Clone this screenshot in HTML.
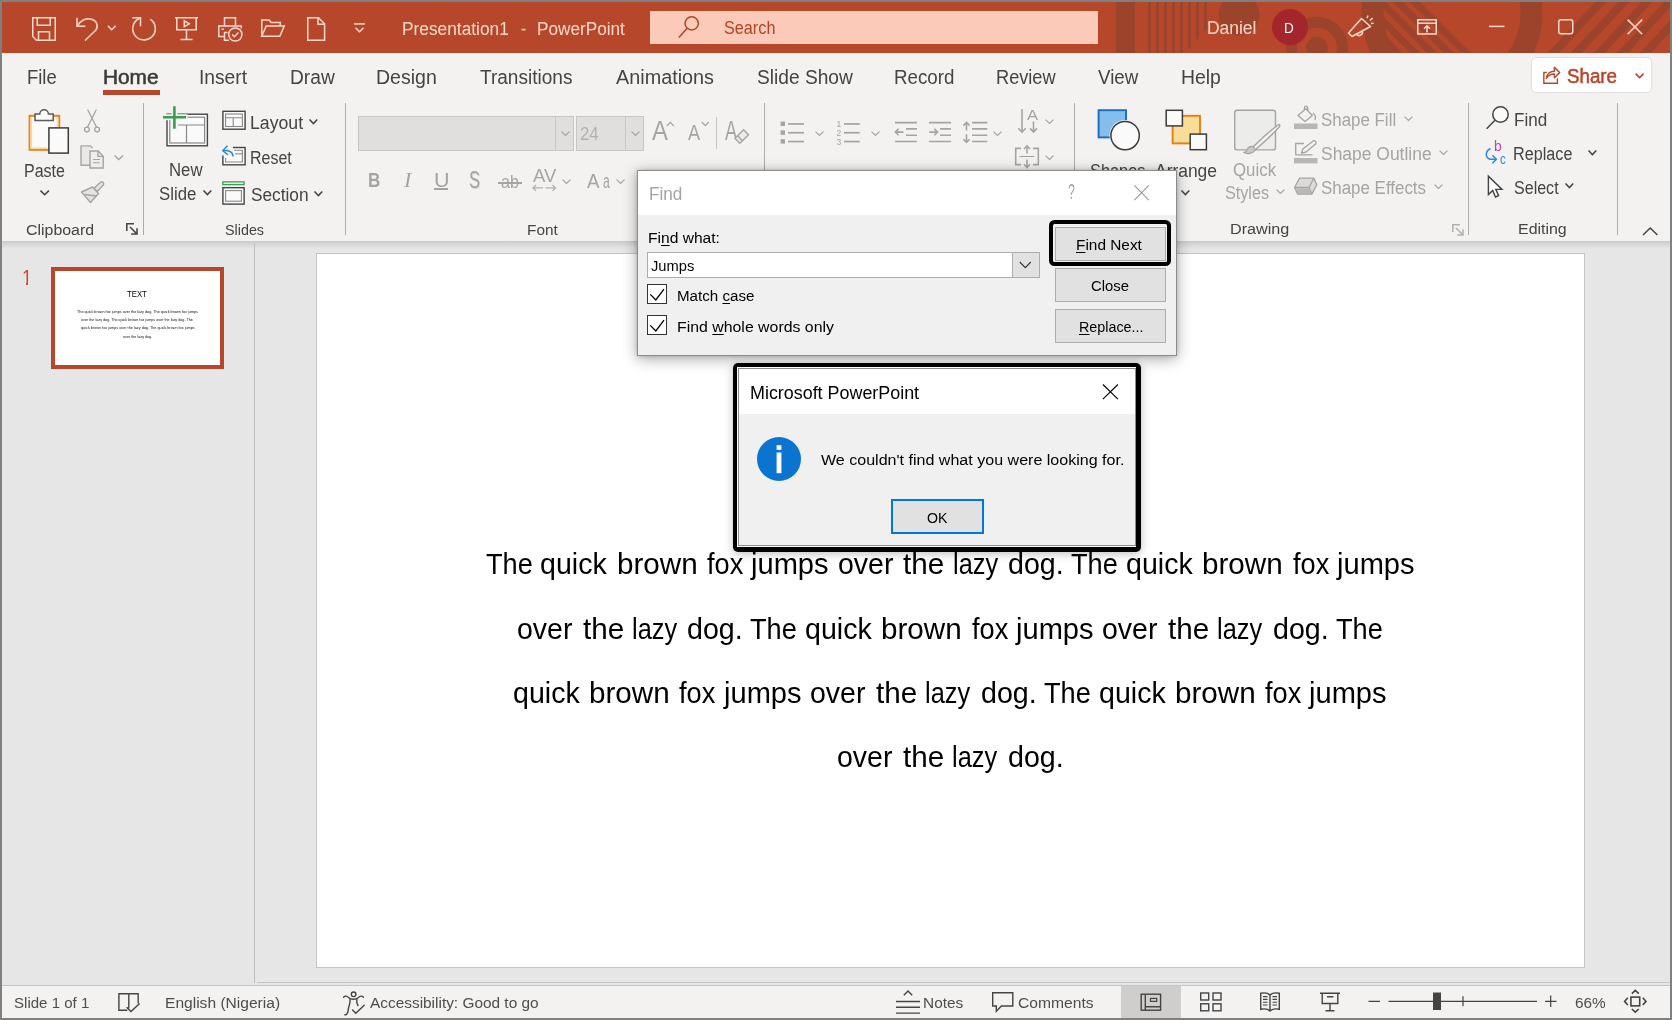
<!DOCTYPE html><html><head><meta charset="utf-8"><title>Presentation1 - PowerPoint</title><style>
*{box-sizing:border-box;margin:0;padding:0}
html,body{width:1672px;height:1020px;overflow:hidden;background:#808080;font-family:"Liberation Sans",sans-serif}
#win{position:absolute;left:2px;top:2px;width:1668px;height:1016px;background:#e6e6e6;overflow:hidden}
#root{position:absolute;left:0;top:0;width:1672px;height:1020px;will-change:transform}
.t{position:absolute;white-space:nowrap;transform-origin:0 50%}
.a{position:absolute}
svg{position:absolute;overflow:visible}
u{text-decoration-thickness:1px;text-underline-offset:2px}
</style></head><body><div id="root">
<div id="win"></div>
<div class="a" style="left:2px;top:2px;width:1668px;height:51px;background:#b7472a"></div>
<svg style="left:1100px;top:2px" width="570" height="51" viewBox="1100 2 570 51"><defs><clipPath id="tb"><rect x="1100" y="2" width="570" height="51"/></clipPath>
<clipPath id="vs"><polygon points="1140,2 1215,2 1215,20 1185,53 1140,53"/></clipPath>
<clipPath id="bigc"><circle cx="1452" cy="13" r="69"/></clipPath>
<clipPath id="rs"><polygon points="1545,53 1590,2 1672,2 1672,53"/></clipPath>
</defs>
<g clip-path="url(#tb)" fill="#9b432b" stroke="none">
<rect x="1116" y="2" width="19" height="51"/>
<g clip-path="url(#vs)">
<rect x="1148" y="2" width="2.8" height="51"/><rect x="1156" y="2" width="2.8" height="51"/><rect x="1164" y="2" width="2.8" height="51"/><rect x="1172" y="2" width="2.8" height="51"/><rect x="1180" y="2" width="2.8" height="51"/><rect x="1188" y="2" width="2.8" height="51"/><rect x="1196" y="2" width="2.8" height="51"/><rect x="1204" y="2" width="2.8" height="51"/>
</g>
<circle cx="1239" cy="15" r="20.5"/>
<circle cx="1317" cy="48" r="11"/>
<circle cx="1317" cy="48" r="25.5" fill="none" stroke="#9b432b" stroke-width="11"/>
<circle cx="1452" cy="13" r="79.5" fill="none" stroke="#9b432b" stroke-width="22"/>
<g clip-path="url(#bigc)" stroke="#9b432b" stroke-width="7" fill="none">
<path d="M1352 -10 L1432 70 M1369 -10 L1449 70 M1386 -10 L1466 70 M1403 -10 L1483 70 M1335 -10 L1415 70 M1318 -10 L1398 70"/>
</g>
<g clip-path="url(#rs)" stroke="#9b432b" stroke-width="8" fill="none">
<path d="M1545 62 L1610 -8 M1568 62 L1633 -8 M1591 62 L1656 -8 M1614 62 L1679 -8 M1637 62 L1702 -8"/>
</g>
</g></svg>
<svg style="left:32px;top:17px" width="24" height="24" viewBox="0 0 24 24" fill="none" stroke="#ffd9cb" stroke-width="1.5"><path d="M.75.75H23.25V23.25H4.5L.75 19.5Z"/><path d="M5.25.75V8.25H18.25V.75"/><path d="M6.5 23.25V14.75H17.5V23.25"/></svg>
<svg style="left:76px;top:17px" width="24" height="24" viewBox="0 0 24 24" fill="none" stroke="#ffd9cb" stroke-width="1.5"><path d="M1 .8V9.2H9.4"/><path d="M1.3 9.2C4 3.5 10 .8 15.5 2.2C21.5 3.8 22.5 10 19.5 13.5L9 23.5"/></svg>
<svg style="left:107px;top:24.5px" width="10" height="6" viewBox="0 0 10 6" fill="none" stroke="#ffd9cb" stroke-width="1.5"><path d="M.8.8L4.7 4.7L8.6.8"/></svg>
<svg style="left:132px;top:17px" width="24" height="24" viewBox="0 0 24 24" fill="none" stroke="#ffd9cb" stroke-width="1.5"><path d="M.2 .75H8.5V9.2"/><path d="M18.4 2.3A11.3 11.3 0 1 1 8.3 1"/></svg>
<svg style="left:175px;top:17px" width="23" height="24" viewBox="0 0 23 24" fill="none" stroke="#ffd9cb" stroke-width="1.5"><path d="M0 .75H23"/><path d="M1.8 .75V12.75H21.2V.75"/><path d="M11.5 12.75V22.5M5.5 22.5H17.5"/><path d="M9.3 3.8L14.3 6.8L9.3 9.8Z"/></svg>
<svg style="left:218px;top:17px" width="25" height="25" viewBox="0 0 25 25" fill="none" stroke="#ffd9cb" stroke-width="1.5"><path d="M6.5 9V.75H17.5V9"/><path d="M6.5 19.5H.75V9H23.25V11.5"/><path d="M9.5 15.5H6.5V23.25H11"/><path d="M3.5 12.2H6"/><circle cx="17.3" cy="17.5" r="6.6"/><path d="M14.2 17.6L16.4 19.8L20.4 15.6"/></svg>
<svg style="left:261px;top:19px" width="24" height="18" viewBox="0 0 24 18" fill="none" stroke="#ffd9cb" stroke-width="1.5"><path d="M.75 17.2V.9H8L10.2 3.5H19.2V7"/><path d="M.75 17.2L5.2 7H23.2L18.8 17.2Z"/></svg>
<svg style="left:307px;top:17px" width="19" height="24" viewBox="0 0 19 24" fill="none" stroke="#ffd9cb" stroke-width="1.5"><path d="M.75.75H11.5L17.6 6.8V23.25H.75Z"/><path d="M11 .75V7.2H17.6"/></svg>
<svg style="left:354px;top:22px" width="12" height="11" viewBox="0 0 12 11" fill="none" stroke="#ffd9cb" stroke-width="1.5"><path d="M0 1.9H11"/><path d="M1.5 5.8L5.5 9.7L9.5 5.8"/></svg>
<div class="a" style="left:650px;top:11px;width:448px;height:33px;background:#fccab9"></div>
<svg style="left:676px;top:14px" width="26" height="26" viewBox="0 0 26 26" fill="none" stroke="#b04528" stroke-width="1.5"><circle cx="15.7" cy="9.4" r="6.6"/><path d="M11.1 14.2L2.9 23.6"/></svg>
<div class="a" style="left:1272px;top:9px;width:36px;height:36px;border-radius:50%;background:#a4262c"></div>
<svg style="left:1347px;top:14px" width="28" height="26" viewBox="0 0 28 26" fill="none" stroke="#ffd9cb" stroke-width="1.5"><path d="M14.5 4.5L23.5 12.5L5 22.5L1.5 19Z" stroke-linejoin="round"/><path d="M9.5 20.2A3.3 3.3 0 0 0 15.2 17"/><path d="M20 4.2L21 1.5M22.8 6.5L25.6 4.2M24 9.6L26.6 9.3"/></svg>
<svg style="left:1417px;top:19px" width="20" height="16" viewBox="0 0 20 16" fill="none" stroke="#ffd9cb" stroke-width="1.5"><rect x=".75" y=".75" width="18.5" height="14.2"/><path d="M.75 4.2H19.25"/><path d="M10 13.5V7M7 9.8L10 6.8L13 9.8"/></svg>
<svg style="left:1489px;top:25px" width="16" height="3" viewBox="0 0 16 3" fill="none" stroke="#ffd9cb" stroke-width="1.5"><path d="M0 1.4H15.5"/></svg>
<svg style="left:1558px;top:19px" width="16" height="16" viewBox="0 0 16 16" fill="none" stroke="#ffd9cb" stroke-width="1.5"><rect x=".75" y=".75" width="14" height="14" rx="2.2"/></svg>
<svg style="left:1627px;top:19px" width="16" height="16" viewBox="0 0 16 16" fill="none" stroke="#ffd9cb" stroke-width="1.5"><path d="M.6.6L15.2 15.2M15.2.6L.6 15.2"/></svg>
<div class="a" style="left:2px;top:53px;width:1668px;height:188px;background:#f3f2f1"></div>
<div class="a" style="left:103px;top:90.2px;width:57px;height:4.4px;background:#b7472a"></div>
<div class="a" style="left:1531px;top:57px;width:121px;height:36px;background:#fff;border:1px solid #e1dfdd;border-radius:5px"></div>
<svg style="left:1543px;top:66px" width="18" height="18" viewBox="0 0 19 18" preserveAspectRatio="none" fill="none" stroke="#b7472a" stroke-width="1.5"><path d="M4 6.5H.9V17.2H15.2V12.5"/><path d="M3.5 12.5C4 8 7.5 5.2 12 5.2V1.2L17.6 6.6L12 11.8V8C8.5 8 5.5 9.5 3.5 12.5Z" stroke-linejoin="round"/></svg>
<svg style="left:1635px;top:72.5px" width="10" height="6" viewBox="0 0 10 6" fill="none" stroke="#b7472a" stroke-width="1.5"><path d="M.6.6L4.6 4.6L8.6.6"/></svg>
<div class="a" style="left:143px;top:103px;width:1px;height:132px;background:#aeacaa"></div>
<div class="a" style="left:345px;top:103px;width:1px;height:132px;background:#aeacaa"></div>
<div class="a" style="left:764px;top:103px;width:1px;height:132px;background:#aeacaa"></div>
<div class="a" style="left:1074px;top:103px;width:1px;height:132px;background:#aeacaa"></div>
<div class="a" style="left:1468px;top:103px;width:1px;height:132px;background:#aeacaa"></div>
<div class="a" style="left:1617px;top:103px;width:1px;height:132px;background:#aeacaa"></div>
<svg style="left:28px;top:109px" width="42" height="46" viewBox="28 109 42 46">
<rect x="29.6" y="115.8" width="29.6" height="34" fill="#fafafa" stroke="#e8821e" stroke-width="2"/>
<path d="M31.2 117.4V148.2H47" fill="none" stroke="#f9dc9a" stroke-width="1.8"/>
<path d="M57.6 117.4V127" fill="none" stroke="#f9dc9a" stroke-width="1.8"/>
<path d="M35 120.4V114H39.8A4.3 4.3 0 0 1 48.4 114H53.2V120.4Z" fill="#fafafa" stroke="#5a5a5a" stroke-width="1.5"/>
<rect x="48.9" y="127.9" width="19.4" height="25.2" fill="#fafafa" stroke="#3b3b3b" stroke-width="1.5"/>
</svg>
<svg style="left:40px;top:190.2px" width="9.4" height="5.8" viewBox="0 0 9.4 5.8" fill="none" stroke="#444" stroke-width="1.5"><path d="M.5 .6L4.70 4.8L8.9 .6"/></svg>
<svg style="left:82px;top:108px" width="20" height="26" viewBox="82 108 20 26" fill="none" stroke="#a6a4a2" stroke-width="1.3">
<path d="M87.6 109.5L96.6 127.2M96.4 109.5L87.4 127.2"/><circle cx="86.9" cy="129.6" r="2.4"/><circle cx="97.1" cy="129.6" r="2.4"/></svg>
<svg style="left:79px;top:144px" width="27" height="26" viewBox="79 144 27 26" fill="#e9e8e7" stroke="#a6a4a2" stroke-width="1.4">
<path d="M90.5 145.9H81V165.2H90"/><path d="M90.5 145.9L92.5 148"/>
<path d="M90 151H98.2L103.2 156.2V168H90Z" fill="#efeeed"/><path d="M98 151V156.4H103.2" fill="none"/>
<path d="M93 159.5H100M93 162.8H100" stroke-width="1.1"/></svg>
<svg style="left:114px;top:155.2px" width="9.6" height="5.6" viewBox="0 0 9.6 5.6" fill="none" stroke="#a6a4a2" stroke-width="1.4"><path d="M.5 .6L4.80 4.6L9.1 .6"/></svg>
<svg style="left:79px;top:180px" width="27" height="25" viewBox="79 180 27 25" fill="#e4e3e2" stroke="#a6a4a2" stroke-width="1.4" stroke-linejoin="round">
<path d="M81.5 192L92.5 187L98.5 193.5L90.5 202.5Z"/><path d="M84.5 194.5L96.2 196"/>
<path d="M94 188.2L100.5 182.2A2 2 0 0 1 103.3 185L97.2 191.6Z"/></svg>
<svg style="left:126px;top:223px" width="12" height="12" viewBox="0 0 12 12" fill="none" stroke="#444" stroke-width="1.55"><path d="M.8 8V.8H8"/><path d="M4 4L11 11M11 5.2V11H5.2"/></svg>
<svg style="left:162px;top:105px" width="48" height="43" viewBox="162 105 48 43">
<rect x="167" y="114.2" width="40.4" height="31.6" fill="#fafafa" stroke="#444" stroke-width="1.4"/>
<rect x="169.8" y="117.2" width="34.8" height="25.8" fill="none" stroke="#8a8886" stroke-width="1.2"/>
<path d="M178 125H204.6M186.5 125V143" fill="none" stroke="#8a8886" stroke-width="1.2"/>
<path d="M161.5 117.2H187.5M174.4 104.5V130.5" stroke="#f3f2f1" stroke-width="6" fill="none"/>
<path d="M163 117.2H186M174.4 106.2V128.8" stroke="#3a9e52" stroke-width="2.6" fill="none"/>
</svg>
<svg style="left:203.3px;top:189.6px" width="8.8" height="5.6" viewBox="0 0 8.8 5.6" fill="none" stroke="#444" stroke-width="1.5"><path d="M.5 .6L4.40 4.6L8.3 .6"/></svg>
<svg style="left:221px;top:109px" width="26" height="22" viewBox="221 109 26 22" fill="none">
<rect x="222.9" y="111.3" width="22.2" height="17.9" fill="#fafafa" stroke="#444" stroke-width="1.4"/>
<rect x="225.6" y="114" width="16.8" height="12.5" stroke="#8a8886" stroke-width="1.1"/>
<path d="M225.6 117.8H242.4M233.2 117.8V126.5" stroke="#8a8886" stroke-width="1.1"/></svg>
<svg style="left:309.2px;top:118.8px" width="8.8" height="5.6" viewBox="0 0 8.8 5.6" fill="none" stroke="#444" stroke-width="1.5"><path d="M.5 .6L4.40 4.6L8.3 .6"/></svg>
<svg style="left:221px;top:144px" width="26" height="23" viewBox="221 144 26 23" fill="none">
<rect x="222.9" y="147.5" width="22.2" height="17.3" fill="#fafafa" stroke="#444" stroke-width="1.4"/>
<path d="M234 150.3H242.4V162H225.6V158" stroke="#8a8886" stroke-width="1.1"/>
<path d="M235 153.8H242.4" stroke="#8a8886" stroke-width="1.1"/>
<rect x="220" y="143" width="13" height="12.5" fill="#f3f2f1" stroke="none"/>
<path d="M223 150.6C229 149.6 233 152.5 233 156.6" stroke="#2b88d8" stroke-width="1.5"/>
<path d="M227.5 145.8L222.8 150.6L227.8 154.8" stroke="#2b88d8" stroke-width="1.5"/></svg>
<svg style="left:221px;top:180px" width="26" height="26" viewBox="221 180 26 26" fill="none">
<rect x="222.8" y="181.9" width="21.3" height="2.7" fill="#fafafa" stroke="#3a9e52" stroke-width="1.3"/>
<rect x="222.9" y="187.7" width="21.2" height="16.4" fill="#fafafa" stroke="#444" stroke-width="1.4"/>
<rect x="225.6" y="190.6" width="15.8" height="10.6" stroke="#8a8886" stroke-width="1.1"/></svg>
<svg style="left:314.2px;top:190.7px" width="8.8" height="5.6" viewBox="0 0 8.8 5.6" fill="none" stroke="#444" stroke-width="1.5"><path d="M.5 .6L4.40 4.6L8.3 .6"/></svg>
<div class="a" style="left:358px;top:116px;width:216px;height:35px;background:#e1dfdd;border:1px solid #c8c6c4"></div>
<div class="a" style="left:555px;top:117px;width:1px;height:33px;background:#c8c6c4"></div>
<svg style="left:561px;top:131.39999999999998px" width="9" height="5.4" viewBox="0 0 9 5.4" fill="none" stroke="#a6a4a2" stroke-width="1.3"><path d="M.5 .6L4.50 4.4L8.5 .6"/></svg>
<div class="a" style="left:576px;top:116px;width:68px;height:35px;background:#e1dfdd;border:1px solid #c8c6c4"></div>
<div class="a" style="left:625px;top:117px;width:1px;height:33px;background:#c8c6c4"></div>
<svg style="left:631px;top:131.39999999999998px" width="9" height="5.4" viewBox="0 0 9 5.4" fill="none" stroke="#a6a4a2" stroke-width="1.3"><path d="M.5 .6L4.50 4.4L8.5 .6"/></svg>
<svg style="left:666px;top:121px" width="9" height="6" viewBox="0 0 9 6" fill="none" stroke="#a6a4a2" stroke-width="1.2"><path d="M.8 5L4.3 1.3L7.8 5"/></svg>
<svg style="left:700.5px;top:121px" width="9" height="6" viewBox="0 0 9 6" fill="none" stroke="#a6a4a2" stroke-width="1.2"><path d="M.8 1L4.3 4.7L7.8 1"/></svg>
<div class="a" style="left:716px;top:117px;width:1px;height:32px;background:#c8c6c4"></div>
<svg style="left:733px;top:128px;z-index:2" width="18" height="17" viewBox="733 128 18 17" fill="#ececeb" stroke="#a6a4a2" stroke-width="1.4" stroke-linejoin="miter"><path d="M743.6 129.8L748.5 134.7L739.9 143.2L735 138.3Z"/><path d="M737.6 135.8L742.5 140.7" fill="none"/></svg>
<div class="a" style="left:434.2px;top:188.2px;width:14px;height:1.5px;background:#a6a4a2"></div>
<div class="a" style="left:498px;top:182.3px;width:23.7px;height:1.3px;background:#a6a4a2"></div>
<svg style="left:532px;top:184px" width="25" height="8" viewBox="532 184 25 8" fill="none" stroke="#b3b1af" stroke-width="1.3"><path d="M533 187.9H543M536 185L533 187.9L536 190.8M545.5 187.9H555.5M552.5 185L555.5 187.9L552.5 190.8"/></svg>
<svg style="left:562px;top:179.39999999999998px" width="9" height="5.4" viewBox="0 0 9 5.4" fill="none" stroke="#a6a4a2" stroke-width="1.3"><path d="M.5 .6L4.50 4.4L8.5 .6"/></svg>
<svg style="left:616px;top:179.39999999999998px" width="9" height="5.4" viewBox="0 0 9 5.4" fill="none" stroke="#a6a4a2" stroke-width="1.3"><path d="M.5 .6L4.50 4.4L8.5 .6"/></svg>
<svg style="left:780px;top:120px" width="25" height="24" viewBox="780 120 25 24" fill="#a6a4a2" stroke="none">
<rect x="780.6" y="121.6" width="4.4" height="4.4"/><rect x="780.6" y="130.4" width="4.4" height="4.4"/><rect x="780.6" y="139.2" width="4.4" height="4.4"/>
<rect x="788" y="123.1" width="16" height="1.7"/><rect x="788" y="131.9" width="16" height="1.7"/><rect x="788" y="140.7" width="16" height="1.7"/></svg>
<svg style="left:815px;top:131.39999999999998px" width="9" height="5.4" viewBox="0 0 9 5.4" fill="none" stroke="#a6a4a2" stroke-width="1.3"><path d="M.5 .6L4.50 4.4L8.5 .6"/></svg>
<svg style="left:836px;top:119px" width="25" height="26" viewBox="836 119 25 26" fill="#a6a4a2" stroke="none">
<rect x="844" y="123.1" width="15.7" height="1.7"/><rect x="844" y="131.9" width="15.7" height="1.7"/><rect x="844" y="140.7" width="15.7" height="1.7"/>
<text x="836.6" y="127.2" font-family="Liberation Sans,sans-serif" font-size="8.5">1</text><text x="836.6" y="136" font-family="Liberation Sans,sans-serif" font-size="8.5">2</text><text x="836.6" y="144.8" font-family="Liberation Sans,sans-serif" font-size="8.5">3</text></svg>
<svg style="left:871px;top:131.39999999999998px" width="9" height="5.4" viewBox="0 0 9 5.4" fill="none" stroke="#a6a4a2" stroke-width="1.3"><path d="M.5 .6L4.50 4.4L8.5 .6"/></svg>
<svg style="left:894px;top:120px" width="24" height="24" viewBox="894 120 24 24" fill="none" stroke="#a6a4a2" stroke-width="1.6">
<path d="M895 122.6H917M906 128.9H917M906 135.2H917M895 141.5H917"/><path d="M895.5 132.1H903.5M898.6 128.9L895.4 132.1L898.6 135.3"/></svg>
<svg style="left:928px;top:120px" width="24" height="24" viewBox="928 120 24 24" fill="none" stroke="#a6a4a2" stroke-width="1.6">
<path d="M929 122.6H951M940 128.9H951M940 135.2H951M929 141.5H951"/><path d="M929.3 132.1H937.5M934.4 128.9L937.6 132.1L934.4 135.3"/></svg>
<svg style="left:962px;top:120px" width="27" height="24" viewBox="962 120 27 24" fill="none" stroke="#a6a4a2" stroke-width="1.6">
<path d="M972 122.6H987.3M972 128.9H987.3M972 135.2H987.3M972 141.5H987.3"/><path d="M966.5 122.4V130.6M966.5 134.2V142.4M963.4 125.6L966.5 122.4L969.6 125.6M963.4 139.2L966.5 142.4L969.6 139.2"/></svg>
<svg style="left:993px;top:131.39999999999998px" width="9" height="5.4" viewBox="0 0 9 5.4" fill="none" stroke="#a6a4a2" stroke-width="1.3"><path d="M.5 .6L4.50 4.4L8.5 .6"/></svg>
<svg style="left:1017px;top:107px" width="24" height="27" viewBox="1017 107 24 27" fill="none" stroke="#a6a4a2" stroke-width="1.6">
<path d="M1022 109V132M1018.3 128.2L1022 132L1025.7 128.2"/><path d="M1033.5 121.5V132M1030 128.4L1033.5 132L1037 128.4"/></svg>
<svg style="left:1045px;top:118.8px" width="9" height="5.4" viewBox="0 0 9 5.4" fill="none" stroke="#a6a4a2" stroke-width="1.3"><path d="M.5 .6L4.50 4.4L8.5 .6"/></svg>
<svg style="left:1014px;top:144px" width="26" height="25" viewBox="1014 144 26 25" fill="none" stroke="#a6a4a2" stroke-width="1.6">
<path d="M1021 148.4H1015.7V164.6H1021M1033 148.4H1038.3V164.6H1033"/><path d="M1019.5 156.5H1034.5" stroke-width="1.1"/>
<path d="M1027 146V153.5M1024 149L1027 145.8L1030 149M1027 159.5V167.3M1024 164.3L1027 167.5L1030 164.3"/></svg>
<svg style="left:1045px;top:154.7px" width="9" height="5.4" viewBox="0 0 9 5.4" fill="none" stroke="#a6a4a2" stroke-width="1.3"><path d="M.5 .6L4.50 4.4L8.5 .6"/></svg>
<svg style="left:1096px;top:108px" width="46" height="44" viewBox="1096 108 46 44">
<rect x="1098.6" y="110.2" width="27.4" height="27.2" fill="#83beec" stroke="#1a6cc0" stroke-width="1.9"/>
<circle cx="1125.1" cy="135.6" r="15.6" fill="#f3f2f1"/>
<circle cx="1125.1" cy="135.6" r="14.2" fill="#fafafa" stroke="#3b3b3b" stroke-width="1.5"/></svg>
<svg style="left:1164px;top:108px" width="45" height="44" viewBox="1164 108 45 44">
<rect x="1172.6" y="115.8" width="27.4" height="27.6" fill="#f9dc95" stroke="#e47f14" stroke-width="1.9"/>
<rect x="1166.2" y="110.3" width="16.2" height="15.6" fill="#fafafa" stroke="#3b3b3b" stroke-width="1.5"/>
<rect x="1190.2" y="134.1" width="16.2" height="15.6" fill="#fafafa" stroke="#3b3b3b" stroke-width="1.5"/></svg>
<svg style="left:1181px;top:189.6px" width="8.8" height="5.6" viewBox="0 0 8.8 5.6" fill="none" stroke="#444" stroke-width="1.5"><path d="M.5 .6L4.40 4.6L8.3 .6"/></svg>
<svg style="left:1233px;top:108px" width="48" height="48" viewBox="1233 108 48 48">
<rect x="1234.7" y="110.3" width="40.8" height="39.6" rx="2.5" fill="#ececeb" stroke="#a6a4a2" stroke-width="1.4"/>
<path d="M1278 125C1270 131 1260 140 1253 147L1255 150C1262 144 1272 135 1279.2 127C1280.5 125 1279.5 124 1278 125Z" fill="#f3f2f1" stroke="#a6a4a2" stroke-width="1.4" stroke-linejoin="round"/>
<path d="M1253.2 146.5C1250 146 1247.5 148 1246.5 150.5C1245.8 152 1244.5 152.5 1243.5 152.3C1247 154.5 1253 154 1255.3 149.8Z" fill="#c8c6c4" stroke="#a6a4a2" stroke-width="1.2" stroke-linejoin="round"/></svg>
<svg style="left:1275.5px;top:189.39999999999998px" width="9" height="5.4" viewBox="0 0 9 5.4" fill="none" stroke="#a6a4a2" stroke-width="1.3"><path d="M.5 .6L4.50 4.4L8.5 .6"/></svg>
<svg style="left:1293px;top:105px" width="26" height="26" viewBox="1293 105 26 26" fill="none" stroke="#a6a4a2" stroke-width="1.3" stroke-linejoin="round">
<rect x="1294" y="123.5" width="23.5" height="5.5" fill="#b9b7b5" stroke="none"/>
<path d="M1298 115.5L1305.8 108.8L1312.4 115.5L1305 121.4Z" fill="#f3f2f1"/><path d="M1304.5 110.2V107.8A1.6 1.6 0 0 1 1307.7 107.8V111"/><path d="M1313 113C1315.5 115 1316 117.5 1315 120" /></svg>
<svg style="left:1403.6px;top:115.8px" width="9" height="5.4" viewBox="0 0 9 5.4" fill="none" stroke="#a6a4a2" stroke-width="1.3"><path d="M.5 .6L4.50 4.4L8.5 .6"/></svg>
<svg style="left:1293px;top:139px" width="26" height="26" viewBox="1293 139 26 26" fill="none" stroke="#a6a4a2" stroke-width="1.3" stroke-linejoin="round">
<rect x="1294" y="158" width="23.5" height="5.4" fill="#b9b7b5" stroke="none"/>
<path d="M1304 143.5H1295.7V154.8H1312.5"/>
<path d="M1301.5 153.2L1302.8 149L1312.6 141.4A1.8 1.8 0 0 1 1315.6 144L1306 152Z" fill="#f3f2f1"/></svg>
<svg style="left:1439.3px;top:149.79999999999998px" width="9" height="5.4" viewBox="0 0 9 5.4" fill="none" stroke="#a6a4a2" stroke-width="1.3"><path d="M.5 .6L4.50 4.4L8.5 .6"/></svg>
<svg style="left:1293px;top:176px" width="26" height="21" viewBox="1293 176 26 21" fill="none" stroke="#a6a4a2" stroke-width="1.3" stroke-linejoin="round">
<path d="M1294.6 187.5L1299.4 178.2H1313.8L1316.8 184.6L1312 194H1297.6Z" fill="#dddbd9"/>
<path d="M1294.6 187.5H1309L1312 194M1309 187.5L1313.8 178.2" /><path d="M1296 188.5H1308.5L1311 193.5H1298Z" fill="#b9b7b5" stroke="none"/></svg>
<svg style="left:1434.3px;top:183.7px" width="9" height="5.4" viewBox="0 0 9 5.4" fill="none" stroke="#a6a4a2" stroke-width="1.3"><path d="M.5 .6L4.50 4.4L8.5 .6"/></svg>
<svg style="left:1451.5px;top:223.5px" width="12" height="12" viewBox="0 0 12 12" fill="none" stroke="#b3b1af" stroke-width="1.55"><path d="M.8 8V.8H8"/><path d="M4 4L11 11M11 5.2V11H5.2"/></svg>
<svg style="left:1485px;top:105px" width="26" height="26" viewBox="1485 105 26 26" fill="none" stroke="#444" stroke-width="1.5">
<circle cx="1500.5" cy="114.5" r="7.7" fill="#fafafa"/><path d="M1495 120.2L1486.6 128.7"/></svg>
<svg style="left:1484px;top:139px" width="25" height="26" viewBox="1484 139 25 26" fill="none" stroke="#2b88d8" stroke-width="1.5">
<path d="M1490.5 148.5C1485.5 151 1484.5 157 1490 159.3H1496"/><path d="M1492.4 155.3L1496.4 159.3L1492.4 163.3"/></svg>
<svg style="left:1588px;top:150.2px" width="8.8" height="5.6" viewBox="0 0 8.8 5.6" fill="none" stroke="#444" stroke-width="1.5"><path d="M.5 .6L4.40 4.6L8.3 .6"/></svg>
<svg style="left:1486px;top:173px" width="19" height="26" viewBox="1486 173 19 26" fill="#fafafa" stroke="#444" stroke-width="1.4" stroke-linejoin="miter">
<path d="M1488.4 176.2V194.6L1492.7 190.5L1495.5 197L1498.6 195.6L1495.8 189.4H1502Z"/></svg>
<svg style="left:1565px;top:183.39999999999998px" width="8.8" height="5.6" viewBox="0 0 8.8 5.6" fill="none" stroke="#444" stroke-width="1.5"><path d="M.5 .6L4.40 4.6L8.3 .6"/></svg>
<svg style="left:1642px;top:227px" width="17" height="9" viewBox="0 0 17 9" fill="none" stroke="#444" stroke-width="1.5"><path d="M1 8L8.2 1L15.4 8"/></svg>
<div class="a" style="left:2px;top:241px;width:1668px;height:8px;background:linear-gradient(#c9c9c9,#d6d6d6 35%,#e6e6e6)"></div>
<div class="a" style="left:254px;top:244px;width:1px;height:739px;background:#bdbdbd"></div>
<div class="a" style="left:257px;top:982px;width:1413px;height:1px;background:#c3c3c3"></div>
<div class="a" style="left:316px;top:253px;width:1269px;height:715px;background:#fff;border:1px solid #c4c4c4"></div>
<div class="a" style="left:19px;top:282.4px;width:6.9px;height:3.4px;background:#e6e6e6;z-index:3"></div><div class="a" style="left:28.3px;top:282.4px;width:5px;height:3.4px;background:#e6e6e6;z-index:3"></div>
<div class="a" style="left:51px;top:267px;width:173px;height:102px;background:#fff;border:4px solid #b7472a"></div>
<div class="a" style="left:2px;top:985px;width:1668px;height:33px;background:#f3f2f1;border-top:1px solid #c6c6c6"></div>
<svg style="left:117px;top:992px" width="24" height="22" viewBox="117 992 24 22" fill="none" stroke="#444" stroke-width="1.4">
<path d="M127.3 1010.2H118.9V993.8H138.2V1003.6M128.8 993.8V1008.6"/>
<path d="M126.6 1007.2L131 1011.5L139.6 1003.6"/></svg>
<svg style="left:341px;top:990px" width="26" height="28" viewBox="341 990 26 28" fill="none" stroke="#444" stroke-width="1.4" stroke-linecap="round">
<circle cx="353.6" cy="994.3" r="2.3"/>
<path d="M343.6 997.2C345 995.5 347 996 348.5 997.5C351 999.8 356 999.8 358.5 997.5C360 996 362 995.5 363.4 997.2"/>
<path d="M350 999.5C350.8 1003.5 348.5 1006 348.3 1009.5C348.2 1012 346.8 1015.5 344.8 1014.8"/>
<path d="M356.8 999.5C356.5 1002 357 1004 358 1005.5"/>
<path d="M352.5 1010L355.8 1013.3L364.2 1005.3"/></svg>
<svg style="left:895px;top:989px" width="27" height="25" viewBox="895 989 27 25" fill="none" stroke="#444" stroke-width="1.4">
<path d="M903.8 995.3L908 991L912.2 995.3"/><path d="M896 1001.5H920M896 1007.3H920M896 1013.1H920"/></svg>
<svg style="left:991px;top:990px" width="24" height="24" viewBox="991 990 24 24" fill="none" stroke="#444" stroke-width="1.4" stroke-linejoin="miter">
<path d="M992.7 992.7H1012.8V1006H1001.5L996.3 1011.2V1006H992.7Z"/></svg>
<div class="a" style="left:1121px;top:986px;width:60px;height:32px;background:#d0cecd"></div>
<svg style="left:1139px;top:991px" width="24" height="22" viewBox="1139 991 24 22" fill="none" stroke="#444" stroke-width="1.4">
<rect x="1141.2" y="994.2" width="19.4" height="16"/><path d="M1145.3 994.2V1010.2M1145.3 1006.7H1160.6"/><rect x="1150.5" y="998.4" width="6.2" height="3" stroke-width="1.2"/></svg>
<svg style="left:1199px;top:991px" width="24" height="22" viewBox="1199 991 24 22" fill="none" stroke="#444" stroke-width="1.4">
<rect x="1200.7" y="993" width="8" height="7"/><rect x="1213" y="993" width="8" height="7"/><rect x="1200.7" y="1003.8" width="8" height="7"/><rect x="1213" y="1003.8" width="8" height="7"/></svg>
<svg style="left:1259px;top:991px" width="23" height="22" viewBox="1259 991 23 22" fill="none" stroke="#444" stroke-width="1.4">
<path d="M1270 995V1011M1270 995C1268 993 1264 992.6 1260.7 993.3V1009.3C1264 1008.6 1268 1009 1270 1011C1272 1009 1276 1008.6 1279.3 1009.3V993.3C1276 992.6 1272 993 1270 995Z"/>
<path d="M1263 996.6H1267.5M1263 999.4H1267.5M1263 1002.2H1267.5M1263 1005H1267.5M1272.5 996.6H1277M1272.5 999.4H1277M1272.5 1002.2H1277M1272.5 1005H1277" stroke-width="1.1"/></svg>
<svg style="left:1319px;top:991px" width="23" height="22" viewBox="1319 991 23 22" fill="none" stroke="#444" stroke-width="1.4">
<path d="M1320 993.2H1340M1322.2 993.2V1003.5H1337.8V993.2M1330 1003.5V1010.5M1325.5 1010.8H1334.5M1327 996.8H1333.4"/></svg>
<svg style="left:1366px;top:990px" width="195" height="24" viewBox="1366 990 195 24" fill="none" stroke="#444" stroke-width="1.2">
<path d="M1368.5 1001.3H1380M1388.5 1001.3H1537M1545 1001.3H1556.5M1550.7 995.5V1007M1463 996.3V1006.3"/>
<rect x="1433" y="992.5" width="8" height="17.5" fill="#444" stroke="none"/></svg>
<svg style="left:1623px;top:989px" width="26" height="25" viewBox="1623 989 26 25" fill="none" stroke="#444" stroke-width="1.6">
<rect x="1630.9" y="997.1" width="8.8" height="8.8"/>
<path d="M1631.8 993.6L1635.3 990.4L1638.8 993.6M1631.8 1009L1635.3 1012.2L1638.8 1009M1627.8 997.8L1624.6 1001.4L1627.8 1005M1642.8 997.8L1646 1001.4L1642.8 1005"/></svg>
<div class="t" style="left:401.74px;top:20.00px;font-size:18px;line-height:18px;color:#ffd9cb;transform:scaleX(0.9612);">Presentation1</div>
<div class="t" style="left:521.00px;top:20.00px;font-size:18px;line-height:18px;color:#ffd9cb;transform:scaleX(0.8667);">-</div>
<div class="t" style="left:537.35px;top:20.00px;font-size:18px;line-height:18px;color:#ffd9cb;transform:scaleX(0.9545);">PowerPoint</div>
<div class="t" style="left:723.80px;top:19.00px;font-size:18px;line-height:18px;color:#b04528;transform:scaleX(0.9014);">Search</div>
<div class="t" style="left:1206.73px;top:19.00px;font-size:18px;line-height:18px;color:#ffd9cb;transform:scaleX(0.9688);">Daniel</div>
<div class="t" style="left:1284.30px;top:20.00px;font-size:15px;line-height:15px;color:#fff;transform:scaleX(0.9000);">D</div>
<div class="t" style="left:27.28px;top:67.00px;font-size:20px;line-height:20px;color:#444;transform:scaleX(0.9195);">File</div>
<div class="t" style="left:199.34px;top:67.00px;font-size:20px;line-height:20px;color:#444;transform:scaleX(0.9603);">Insert</div>
<div class="t" style="left:289.74px;top:67.00px;font-size:20px;line-height:20px;color:#444;transform:scaleX(0.9583);">Draw</div>
<div class="t" style="left:375.72px;top:67.00px;font-size:20px;line-height:20px;color:#444;transform:scaleX(0.9762);">Design</div>
<div class="t" style="left:479.60px;top:67.00px;font-size:20px;line-height:20px;color:#444;transform:scaleX(0.9519);">Transitions</div>
<div class="t" style="left:615.70px;top:67.00px;font-size:20px;line-height:20px;color:#444;transform:scaleX(0.9905);">Animations</div>
<div class="t" style="left:757.20px;top:67.00px;font-size:20px;line-height:20px;color:#444;transform:scaleX(0.9581);">Slide Show</div>
<div class="t" style="left:894.26px;top:67.00px;font-size:20px;line-height:20px;color:#444;transform:scaleX(0.9367);">Record</div>
<div class="t" style="left:996.29px;top:67.00px;font-size:20px;line-height:20px;color:#444;transform:scaleX(0.9089);">Review</div>
<div class="t" style="left:1098.00px;top:67.00px;font-size:20px;line-height:20px;color:#444;transform:scaleX(0.9347);">View</div>
<div class="t" style="left:1181.23px;top:67.00px;font-size:20px;line-height:20px;color:#444;transform:scaleX(0.9698);">Help</div>
<div class="t" style="left:102.86px;top:67.00px;font-size:20px;line-height:20px;color:#3b3a39;transform:scaleX(1.0397);-webkit-text-stroke:0.55px #3b3a39;">Home</div>
<div class="t" style="left:1567.40px;top:66.00px;font-size:20px;line-height:20px;color:#b7472a;transform:scaleX(0.9372);-webkit-text-stroke:0.55px #b7472a;">Share</div>
<div class="t" style="left:24.21px;top:162.00px;font-size:18px;line-height:18px;color:#444;transform:scaleX(0.8885);">Paste</div>
<div class="t" style="left:26.20px;top:222.00px;font-size:15.2px;line-height:15.2px;color:#444;transform:scaleX(1.0471);">Clipboard</div>
<div class="t" style="left:169.37px;top:161.00px;font-size:18px;line-height:18px;color:#444;transform:scaleX(0.9303);">New</div>
<div class="t" style="left:159.00px;top:185.00px;font-size:18px;line-height:18px;color:#444;transform:scaleX(0.9322);">Slide</div>
<div class="t" style="left:249.92px;top:114.00px;font-size:18px;line-height:18px;color:#444;transform:scaleX(0.9822);">Layout</div>
<div class="t" style="left:250.31px;top:149.00px;font-size:18px;line-height:18px;color:#444;transform:scaleX(0.8866);">Reset</div>
<div class="t" style="left:250.90px;top:186.00px;font-size:18px;line-height:18px;color:#444;transform:scaleX(0.9589);">Section</div>
<div class="t" style="left:224.70px;top:222.00px;font-size:15.2px;line-height:15.2px;color:#444;transform:scaleX(0.9432);">Slides</div>
<div class="t" style="left:579.70px;top:125.00px;font-size:18px;line-height:18px;color:#b3b1af;transform:scaleX(0.9345);">24</div>
<div class="t" style="left:651.60px;top:117.00px;font-size:28px;line-height:28px;color:#a6a4a2;transform:scaleX(0.8526);">A</div>
<div class="t" style="left:688.40px;top:122.00px;font-size:21.6px;line-height:21.6px;color:#a6a4a2;transform:scaleX(0.8400);">A</div>
<div class="t" style="left:725.40px;top:117.00px;font-size:28px;line-height:28px;color:#a6a4a2;transform:scaleX(0.6526);">A</div>
<div class="t" style="left:368.05px;top:170.00px;font-size:20px;line-height:20px;color:#a6a4a2;transform:scaleX(0.8538);font-weight:700;">B</div>
<div class="t" style="left:404.36px;top:170.00px;font-size:21px;line-height:21px;color:#a6a4a2;transform:scaleX(1.0556);font-style:italic;font-family:'Liberation Serif', serif;">I</div>
<div class="t" style="left:433.62px;top:170.00px;font-size:20px;line-height:20px;color:#a6a4a2;transform:scaleX(1.0750);">U</div>
<div class="t" style="left:469.99px;top:170.00px;font-size:23px;line-height:23px;color:#d3d1cf;transform:scaleX(0.7143);">S</div>
<div class="t" style="left:468.79px;top:169.00px;font-size:23px;line-height:23px;color:#a6a4a2;transform:scaleX(0.7143);">S</div>
<div class="t" style="left:501.10px;top:173.00px;font-size:18px;line-height:18px;color:#a6a4a2;transform:scaleX(0.8945);">ab</div>
<div class="t" style="left:532.50px;top:167.00px;font-size:18px;line-height:18px;color:#a6a4a2;transform:scaleX(1.0278);">AV</div>
<div class="t" style="left:587.30px;top:171.00px;font-size:20px;line-height:20px;color:#a6a4a2;transform:scaleX(0.9357);">A</div>
<div class="t" style="left:602.80px;top:171.00px;font-size:20px;line-height:20px;color:#a6a4a2;transform:scaleX(0.6083);">a</div>
<div class="t" style="left:526.69px;top:222.00px;font-size:15.2px;line-height:15.2px;color:#444;transform:scaleX(1.0109);">Font</div>
<div class="t" style="left:1027.30px;top:107.00px;font-size:15px;line-height:15px;color:#a6a4a2;transform:scaleX(1.1000);">A</div>
<div class="t" style="left:1090.00px;top:162.00px;font-size:18px;line-height:18px;color:#444;transform:scaleX(0.9075);">Shapes</div>
<div class="t" style="left:1155.00px;top:162.00px;font-size:18px;line-height:18px;color:#444;transform:scaleX(0.9684);">Arrange</div>
<div class="t" style="left:1233.30px;top:161.00px;font-size:18px;line-height:18px;color:#a6a4a2;transform:scaleX(0.9360);">Quick</div>
<div class="t" style="left:1224.50px;top:184.00px;font-size:18px;line-height:18px;color:#a6a4a2;transform:scaleX(0.8977);">Styles</div>
<div class="t" style="left:1321.40px;top:111.00px;font-size:18px;line-height:18px;color:#a6a4a2;transform:scaleX(0.9387);">Shape Fill</div>
<div class="t" style="left:1321.40px;top:145.00px;font-size:18px;line-height:18px;color:#a6a4a2;transform:scaleX(0.9696);">Shape Outline</div>
<div class="t" style="left:1321.40px;top:179.00px;font-size:18px;line-height:18px;color:#a6a4a2;transform:scaleX(0.9396);">Shape Effects</div>
<div class="t" style="left:1229.73px;top:221.00px;font-size:15.2px;line-height:15.2px;color:#444;transform:scaleX(1.0652);">Drawing</div>
<div class="t" style="left:1513.55px;top:111.00px;font-size:18px;line-height:18px;color:#444;transform:scaleX(0.9483);">Find</div>
<div class="t" style="left:1494.20px;top:138.00px;font-size:15px;line-height:15px;color:#b146c2;transform:scaleX(0.9250);">b</div>
<div class="t" style="left:1500.00px;top:151.00px;font-size:15px;line-height:15px;color:#2b88d8;transform:scaleX(0.7750);">c</div>
<div class="t" style="left:1513.30px;top:145.00px;font-size:18px;line-height:18px;color:#444;transform:scaleX(0.8996);">Replace</div>
<div class="t" style="left:1514.00px;top:179.00px;font-size:18px;line-height:18px;color:#444;transform:scaleX(0.8915);">Select</div>
<div class="t" style="left:1518.45px;top:221.00px;font-size:15.2px;line-height:15.2px;color:#444;transform:scaleX(1.0491);">Editing</div>
<div class="t" style="left:21.71px;top:267.00px;font-size:22.6px;line-height:22.6px;color:#d24726;transform:scaleX(0.7909);">1</div>
<div class="t" style="left:485.50px;top:550.00px;font-size:28.8px;line-height:28.8px;color:#000;transform:scaleX(0.9443);">The</div>
<div class="t" style="left:540.41px;top:550.00px;font-size:28.8px;line-height:28.8px;color:#000;transform:scaleX(0.9921);">quick</div>
<div class="t" style="left:616.77px;top:550.00px;font-size:28.8px;line-height:28.8px;color:#000;transform:scaleX(1.0299);">brown</div>
<div class="t" style="left:706.90px;top:550.00px;font-size:28.8px;line-height:28.8px;color:#000;transform:scaleX(0.9432);">fox</div>
<div class="t" style="left:751.31px;top:550.00px;font-size:28.8px;line-height:28.8px;color:#000;transform:scaleX(1.0101);">jumps</div>
<div class="t" style="left:837.61px;top:550.00px;font-size:28.8px;line-height:28.8px;color:#000;transform:scaleX(0.9904);">over</div>
<div class="t" style="left:903.40px;top:550.00px;font-size:28.8px;line-height:28.8px;color:#000;transform:scaleX(1.0303);">the</div>
<div class="t" style="left:952.72px;top:550.00px;font-size:28.8px;line-height:28.8px;color:#000;transform:scaleX(0.8797);">lazy</div>
<div class="t" style="left:1008.11px;top:550.00px;font-size:28.8px;line-height:28.8px;color:#000;transform:scaleX(0.9935);">dog.</div>
<div class="t" style="left:1071.10px;top:550.00px;font-size:28.8px;line-height:28.8px;color:#000;transform:scaleX(0.9443);">The</div>
<div class="t" style="left:1126.01px;top:550.00px;font-size:28.8px;line-height:28.8px;color:#000;transform:scaleX(0.9921);">quick</div>
<div class="t" style="left:1202.37px;top:550.00px;font-size:28.8px;line-height:28.8px;color:#000;transform:scaleX(1.0299);">brown</div>
<div class="t" style="left:1292.50px;top:550.00px;font-size:28.8px;line-height:28.8px;color:#000;transform:scaleX(0.9432);">fox</div>
<div class="t" style="left:1336.91px;top:550.00px;font-size:28.8px;line-height:28.8px;color:#000;transform:scaleX(1.0101);">jumps</div>
<div class="t" style="left:516.71px;top:615.00px;font-size:28.8px;line-height:28.8px;color:#000;transform:scaleX(0.9904);">over</div>
<div class="t" style="left:582.50px;top:615.00px;font-size:28.8px;line-height:28.8px;color:#000;transform:scaleX(1.0303);">the</div>
<div class="t" style="left:631.82px;top:615.00px;font-size:28.8px;line-height:28.8px;color:#000;transform:scaleX(0.8797);">lazy</div>
<div class="t" style="left:687.21px;top:615.00px;font-size:28.8px;line-height:28.8px;color:#000;transform:scaleX(0.9935);">dog.</div>
<div class="t" style="left:750.20px;top:615.00px;font-size:28.8px;line-height:28.8px;color:#000;transform:scaleX(0.9443);">The</div>
<div class="t" style="left:805.11px;top:615.00px;font-size:28.8px;line-height:28.8px;color:#000;transform:scaleX(0.9921);">quick</div>
<div class="t" style="left:881.47px;top:615.00px;font-size:28.8px;line-height:28.8px;color:#000;transform:scaleX(1.0299);">brown</div>
<div class="t" style="left:971.60px;top:615.00px;font-size:28.8px;line-height:28.8px;color:#000;transform:scaleX(0.9432);">fox</div>
<div class="t" style="left:1016.01px;top:615.00px;font-size:28.8px;line-height:28.8px;color:#000;transform:scaleX(1.0101);">jumps</div>
<div class="t" style="left:1102.31px;top:615.00px;font-size:28.8px;line-height:28.8px;color:#000;transform:scaleX(0.9904);">over</div>
<div class="t" style="left:1168.10px;top:615.00px;font-size:28.8px;line-height:28.8px;color:#000;transform:scaleX(1.0303);">the</div>
<div class="t" style="left:1217.42px;top:615.00px;font-size:28.8px;line-height:28.8px;color:#000;transform:scaleX(0.8797);">lazy</div>
<div class="t" style="left:1272.81px;top:615.00px;font-size:28.8px;line-height:28.8px;color:#000;transform:scaleX(0.9935);">dog.</div>
<div class="t" style="left:1335.80px;top:615.00px;font-size:28.8px;line-height:28.8px;color:#000;transform:scaleX(0.9443);">The</div>
<div class="t" style="left:512.91px;top:679.00px;font-size:28.8px;line-height:28.8px;color:#000;transform:scaleX(0.9921);">quick</div>
<div class="t" style="left:589.27px;top:679.00px;font-size:28.8px;line-height:28.8px;color:#000;transform:scaleX(1.0299);">brown</div>
<div class="t" style="left:679.40px;top:679.00px;font-size:28.8px;line-height:28.8px;color:#000;transform:scaleX(0.9432);">fox</div>
<div class="t" style="left:723.81px;top:679.00px;font-size:28.8px;line-height:28.8px;color:#000;transform:scaleX(1.0101);">jumps</div>
<div class="t" style="left:810.11px;top:679.00px;font-size:28.8px;line-height:28.8px;color:#000;transform:scaleX(0.9904);">over</div>
<div class="t" style="left:875.90px;top:679.00px;font-size:28.8px;line-height:28.8px;color:#000;transform:scaleX(1.0303);">the</div>
<div class="t" style="left:925.22px;top:679.00px;font-size:28.8px;line-height:28.8px;color:#000;transform:scaleX(0.8797);">lazy</div>
<div class="t" style="left:980.61px;top:679.00px;font-size:28.8px;line-height:28.8px;color:#000;transform:scaleX(0.9935);">dog.</div>
<div class="t" style="left:1043.60px;top:679.00px;font-size:28.8px;line-height:28.8px;color:#000;transform:scaleX(0.9443);">The</div>
<div class="t" style="left:1098.51px;top:679.00px;font-size:28.8px;line-height:28.8px;color:#000;transform:scaleX(0.9921);">quick</div>
<div class="t" style="left:1174.87px;top:679.00px;font-size:28.8px;line-height:28.8px;color:#000;transform:scaleX(1.0299);">brown</div>
<div class="t" style="left:1265.00px;top:679.00px;font-size:28.8px;line-height:28.8px;color:#000;transform:scaleX(0.9432);">fox</div>
<div class="t" style="left:1309.41px;top:679.00px;font-size:28.8px;line-height:28.8px;color:#000;transform:scaleX(1.0101);">jumps</div>
<div class="t" style="left:837.31px;top:743.00px;font-size:28.8px;line-height:28.8px;color:#000;transform:scaleX(0.9904);">over</div>
<div class="t" style="left:903.10px;top:743.00px;font-size:28.8px;line-height:28.8px;color:#000;transform:scaleX(1.0303);">the</div>
<div class="t" style="left:952.42px;top:743.00px;font-size:28.8px;line-height:28.8px;color:#000;transform:scaleX(0.8797);">lazy</div>
<div class="t" style="left:1007.81px;top:743.00px;font-size:28.8px;line-height:28.8px;color:#000;transform:scaleX(0.9935);">dog.</div>
<div class="t" style="left:870.96px;top:396.00px;font-size:60px;line-height:60px;color:#000;transform:scaleX(1.0350);">TEXT</div>
<div class="t" style="left:76.94px;top:310.00px;font-size:4.2px;line-height:4.2px;color:#111;transform:scaleX(0.8964);">The quick brown fox jumps over the lazy dog. The quick brown fox jumps</div>
<div class="t" style="left:81.14px;top:318.00px;font-size:4.2px;line-height:4.2px;color:#111;transform:scaleX(0.8839);">over the lazy dog. The quick brown fox jumps over the lazy dog. The</div>
<div class="t" style="left:80.64px;top:326.00px;font-size:4.2px;line-height:4.2px;color:#111;transform:scaleX(0.8983);">quick brown fox jumps over the lazy dog. The quick brown fox jumps</div>
<div class="t" style="left:122.89px;top:335.00px;font-size:4.2px;line-height:4.2px;color:#111;transform:scaleX(0.8837);">over the lazy dog.</div>
<div class="t" style="left:127.30px;top:290.00px;font-size:8.7px;line-height:8.7px;color:#000;transform:scaleX(0.8910);">TEXT</div>
<div class="t" style="left:13.70px;top:995.00px;font-size:15.5px;line-height:15.5px;color:#4d4d4d;transform:scaleX(0.9710);">Slide 1 of 1</div>
<div class="t" style="left:164.70px;top:995.00px;font-size:15.5px;line-height:15.5px;color:#4d4d4d;transform:scaleX(1.0043);">English (Nigeria)</div>
<div class="t" style="left:369.50px;top:995.00px;font-size:15.5px;line-height:15.5px;color:#4d4d4d;transform:scaleX(0.9935);">Accessibility: Good to go</div>
<div class="t" style="left:922.51px;top:995.00px;font-size:15.5px;line-height:15.5px;color:#4d4d4d;transform:scaleX(0.9939);">Notes</div>
<div class="t" style="left:1017.60px;top:995.00px;font-size:15.5px;line-height:15.5px;color:#4d4d4d;transform:scaleX(1.0095);">Comments</div>
<div class="t" style="left:1575.00px;top:995.00px;font-size:15.5px;line-height:15.5px;color:#4d4d4d;transform:scaleX(0.9923);">66%</div>
<div class="a" style="left:637px;top:170px;width:540px;height:186px;background:#f0f0f0;border:1px solid #8c8c8c;box-shadow:0 3px 14px rgba(0,0,0,.33),0 0 4px rgba(0,0,0,.18)"><div style="position:absolute;left:0;top:0;width:538px;height:44px;background:#fff"></div></div>
<svg style="left:1134px;top:185px" width="16" height="16" viewBox="0 0 16 16" fill="none" stroke="#9a9a9a" stroke-width="1.1"><path d="M.4.4L14.8 15.2M14.8.4L.4 15.2"/></svg>
<div class="a" style="left:647px;top:252px;width:393px;height:26px;background:#fff;border:1px solid #adadad"></div>
<div class="a" style="left:1012px;top:252px;width:28px;height:26px;background:#e1e1e1;border:1px solid #adadad"></div>
<svg style="left:1019px;top:261px" width="13" height="8" viewBox="0 0 13 8" fill="none" stroke="#333" stroke-width="1.1"><path d="M.8 1L6.3 6.6L11.8 1"/></svg>
<div class="a" style="left:647px;top:284px;width:20px;height:20px;background:#fff;border:1px solid #333"></div>
<svg style="left:647px;top:284px" width="20" height="20" viewBox="0 0 20 20" fill="none" stroke="#000" stroke-width="1.3"><path d="M3.3 10.4L8.8 15.9L17 5.2"/></svg>
<div class="a" style="left:647px;top:315.3px;width:20px;height:20px;background:#fff;border:1px solid #333"></div>
<svg style="left:647px;top:315.3px" width="20" height="20" viewBox="0 0 20 20" fill="none" stroke="#000" stroke-width="1.3"><path d="M3.3 10.4L8.8 15.9L17 5.2"/></svg>
<div class="a" style="left:1048.8px;top:220.3px;width:122.2px;height:45.8px;border:4px solid #000;border-radius:5.5px"></div>
<div class="a" style="left:1055px;top:227.3px;width:111px;height:33.8px;background:#e1e1e1;border:1px solid #adadad"></div>
<div class="a" style="left:1055px;top:268.3px;width:111px;height:33.8px;background:#e1e1e1;border:1px solid #adadad"></div>
<div class="a" style="left:1055px;top:309.4px;width:111px;height:33.8px;background:#e1e1e1;border:1px solid #adadad"></div>
<div class="a" style="left:733.2px;top:363.2px;width:407.8px;height:188.4px;background:#000;border-radius:5px;box-shadow:0 2px 10px rgba(0,0,0,.25)"></div>
<div class="a" style="left:736.7px;top:366.7px;width:399.8px;height:180.4px;background:#fff"></div>
<div class="a" style="left:737.5px;top:367.5px;width:398px;height:178px;background:#f0f0f0;border:1px solid #8c8c8c"><div style="position:absolute;left:0;top:0;width:396px;height:45.6px;background:#fff"></div></div>
<svg style="left:1102px;top:384px" width="17" height="16" viewBox="0 0 17 16" fill="none" stroke="#000" stroke-width="1.1"><path d="M.9.5L15.9 15.2M15.9.5L.9 15.2"/></svg>
<svg style="left:757px;top:437px" width="44" height="44" viewBox="0 0 44 44"><circle cx="22" cy="22" r="22" fill="#0a74d0"/><rect x="19.6" y="8.2" width="4.8" height="4.6" fill="#fff"/><rect x="19.6" y="15.5" width="4.8" height="20.7" fill="#fff"/></svg>
<div class="a" style="left:891px;top:499px;width:93px;height:35px;background:#e1e1e1;border:2px solid #0078d7"></div>
<div class="t" style="left:648.87px;top:185.00px;font-size:18.5px;line-height:18.5px;color:#a5a3a1;transform:scaleX(0.9280);">Find</div>
<div class="t" style="left:1068.40px;top:182.00px;font-size:21.5px;line-height:21.5px;color:#a5a3a1;transform:scaleX(0.5750);">?</div>
<div class="t" style="left:648.48px;top:230.00px;font-size:15.3px;line-height:15.3px;color:#000;transform:scaleX(1.0188);">Fi<u>n</u>d what:</div>
<div class="t" style="left:650.80px;top:258.00px;font-size:15.3px;line-height:15.3px;color:#000;transform:scaleX(0.9602);">Jumps</div>
<div class="t" style="left:676.61px;top:288.00px;font-size:15.3px;line-height:15.3px;color:#000;transform:scaleX(0.9894);">Match <u>c</u>ase</div>
<div class="t" style="left:676.56px;top:319.00px;font-size:15.3px;line-height:15.3px;color:#000;transform:scaleX(1.0366);">Find <u>w</u>hole words only</div>
<div class="t" style="left:1076.29px;top:237.00px;font-size:15.3px;line-height:15.3px;color:#000;transform:scaleX(1.0060);"><u>F</u>ind Next</div>
<div class="t" style="left:1091.40px;top:278.00px;font-size:15.3px;line-height:15.3px;color:#000;transform:scaleX(0.9689);">Close</div>
<div class="t" style="left:1078.66px;top:319.00px;font-size:15.3px;line-height:15.3px;color:#000;transform:scaleX(0.9366);"><u>R</u>eplace...</div>
<div class="t" style="left:749.88px;top:385.00px;font-size:17.6px;line-height:17.6px;color:#000;transform:scaleX(1.0173);">Microsoft PowerPoint</div>
<div class="t" style="left:820.50px;top:452.00px;font-size:15.3px;line-height:15.3px;color:#000;transform:scaleX(1.0492);">We couldn't find what you were looking for.</div>
<div class="t" style="left:927.40px;top:510.00px;font-size:15.3px;line-height:15.3px;color:#000;transform:scaleX(0.9258);">OK</div>
</div></body></html>
